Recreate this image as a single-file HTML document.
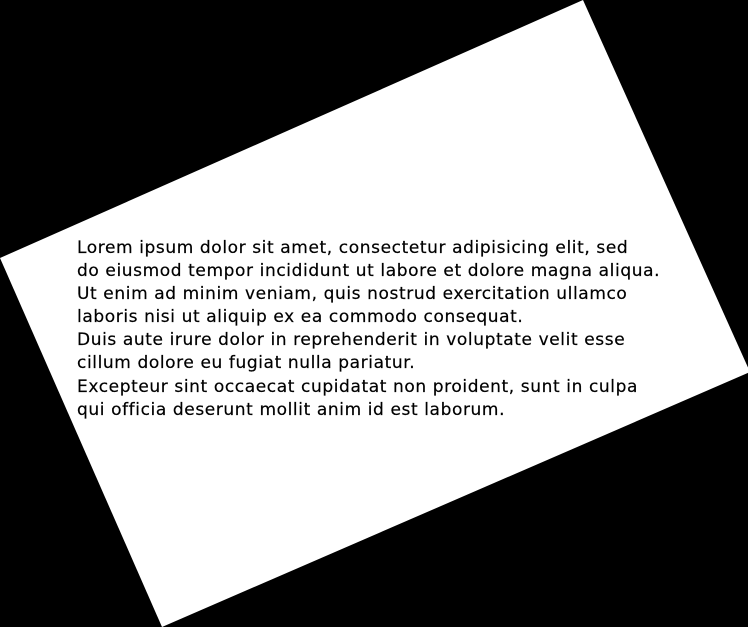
<!DOCTYPE html>
<html><head><meta charset="utf-8"><style>
html,body{margin:0;padding:0;background:#000;width:748px;height:627px;overflow:hidden;position:relative}
svg{position:absolute;left:0;top:0}
.t{position:absolute;left:77px;top:237px;font-family:"DejaVu Sans","Liberation Sans",sans-serif;font-size:17px;letter-spacing:0.6px;line-height:23.1px;color:#000;white-space:pre;-webkit-text-stroke:0.2px #000}
</style></head><body>
<svg width="748" height="627"><polygon points="0,258 583,0 750,372 162,627" fill="#fff"/></svg>
<div class="t">Lorem ipsum dolor sit amet, consectetur adipisicing elit, sed
do eiusmod tempor incididunt ut labore et dolore magna aliqua.
Ut enim ad minim veniam, quis nostrud exercitation ullamco
laboris nisi ut aliquip ex ea commodo consequat.
Duis aute irure dolor in reprehenderit in voluptate velit esse
cillum dolore eu fugiat nulla pariatur.
Excepteur sint occaecat cupidatat non proident, sunt in culpa
qui officia deserunt mollit anim id est laborum.</div>
</body></html>
